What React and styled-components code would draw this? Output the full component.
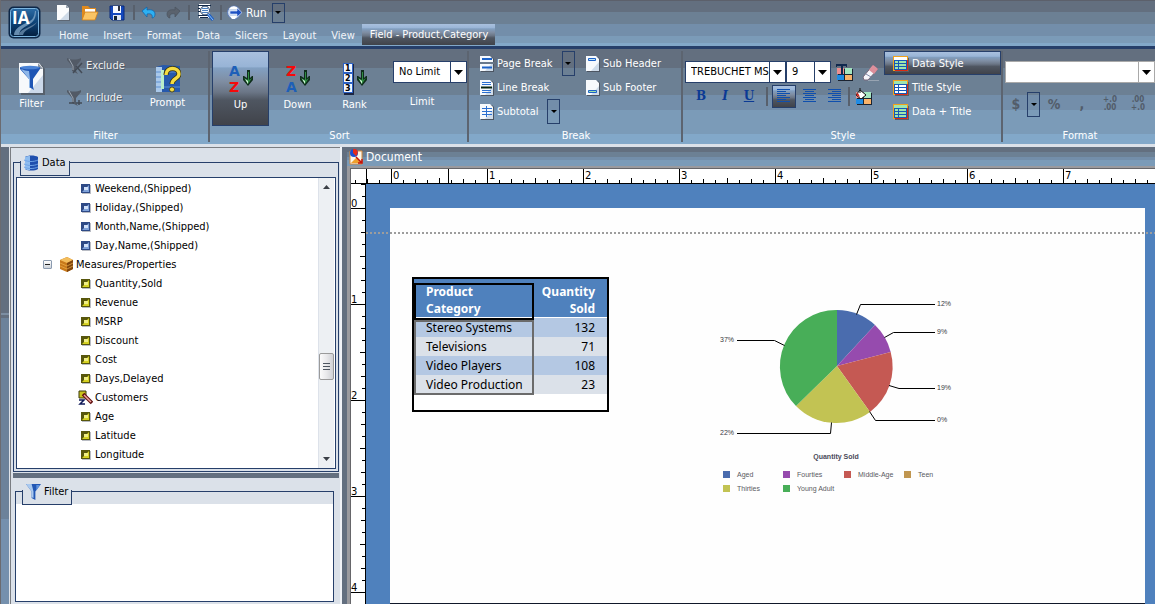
import React, { useEffect, useState } from 'react';
import styled, { createGlobalStyle, css } from 'styled-components';

const NAVY = '#263f6a';
const PANEL = '#dbe1e9';
const UI_FONT = '"DejaVu Sans Condensed", "DejaVu Sans", sans-serif';

const GlobalStyle = createGlobalStyle`
    * {
        box-sizing: border-box;
    }
    body {
        margin: 0;
        background: #ffffff;
        font-family: ${UI_FONT};
        font-size: 11px;
        line-height: 14px;
    }
    button, select, input {
        font: inherit;
    }
`;

const glossy = css`
    background: linear-gradient(#a9c0de, #98b4d6 20%, #82a0c2 22%, #7f8ea3 40%, #6b7686 55%, #4f5661 66%, #40434a);
`;

const Window = styled.div`
    display: flex;
    flex-direction: column;
    height: calc(100vh - 2px);
    margin-right: 2px;
    border-left: 1px solid #6b6b70;
    overflow: hidden;
`;

/* ---------- top bar ---------- */

const TopBar = styled.header`
    display: flex;
    height: 49px;
    border-top: 1px solid #5c606b;
    border-bottom: 3px solid ${NAVY};
    background: linear-gradient(#636f7f 11px, #6c8094 11px 23px, #738eaa 23px 35px, #7b9bb8 35px 42px, #82a8c9 42px);
`;
const LogoButton = styled.button`
    width: 50px;
    padding: 2px 0 0 7px;
    border: 0;
    background: none;
    text-align: left;
`;
const TopRows = styled.div`
    flex: 1;
`;
const QuickBar = styled.div`
    display: flex;
    align-items: center;
    height: 23px;
    gap: 5px;
    padding-left: 3px;
`;
const IconButton = styled.button`
    display: flex;
    align-items: center;
    justify-content: center;
    width: ${props => props.$width || 20}px;
    height: 23px;
    padding: 0;
    border: 1px solid transparent;
    background: none;
    color: #ffffff;
    
    ${props => props.$active && css`
        ${glossy}
        border-color: ${NAVY};
    `}
`;
const QuickSeparator = styled.span`
    width: 2px;
    height: 15px;
    background: #58606c;
`;
const RunButton = styled.button`
    display: flex;
    align-items: center;
    gap: 3px;
    padding: 0;
    border: 0;
    background: none;
    color: #ffffff;
    font-size: 12px;
`;
const Tabs = styled.nav`
    display: flex;
    height: 21px;
`;
const Tab = styled.a`
    padding: 5px 7px 0 8px;
    color: #f2f5f9;
    text-decoration: none;
    white-space: nowrap;
    
    ${props => props.$active && css`
        ${glossy}
        padding-top: 4px;
        color: #ffffff;
    `}
`;

/* ---------- ribbon ---------- */

const Ribbon = styled.div`
    display: flex;
    height: 98px;
    padding: 2px 0;
    border-bottom: 3px solid ${PANEL};
    background: linear-gradient(#636f7f 19px, #6c8094 19px 46px, #738eaa 46px 61px, #7b9bb8 61px 85px, #82a8c9 85px);
`;
const Group = styled.section`
    display: flex;
    flex-direction: column;
    min-width: 0;
    ${props => props.$width ? css`
        flex: 0 0 ${props.$width}px;
        border-right: 2px solid #5c6470;
    ` : css`
        flex: 1;
    `}
    padding-left: 2px;
    color: #ffffff;
`;
const GroupBody = styled.div`
    display: flex;
    flex: 1;
    gap: ${props => props.$gap || 0}px;
`;
const GroupLabel = styled.h2`
    margin: 0;
    font-size: 11px;
    font-weight: normal;
    line-height: 12px;
    text-align: center;
`;
const BigButton = styled.button`
    display: flex;
    flex-direction: column;
    align-items: center;
    justify-content: center;
    gap: 2px;
    width: 57px;
    height: 75px;
    padding: 0 0 4px;
    border: 1px solid transparent;
    background: none;
    color: #ffffff;
    line-height: 14px;

    ${props => props.$active && css`
        ${glossy}
        border-color: ${NAVY};
    `}
`;
const ToolColumn = styled.div`
    display: flex;
    flex-direction: column;
    flex: ${props => props.$width ? 'none' : 1};
    width: ${props => props.$width ? `${props.$width}px` : 'auto'};
    padding-left: ${props => props.$indent || 0}px;
    padding-top: ${props => props.$top || 0}px;
    gap: ${props => props.$gap || 0}px;
`;
const ToolRow = styled.div`
    display: flex;
    align-items: center;
    height: 24px;
    padding-left: ${props => props.$indent || 0}px;
    gap: ${props => props.$gap || 0}px;
`;
const ToolButton = styled.button`
    display: flex;
    align-items: center;
    gap: 3px;
    height: 24px;
    width: ${props => props.$wide ? '117px' : 'auto'};
    padding: 2px 0 0 ${props => props.$wide ? 8 : 0}px;
    border: ${props => props.$wide ? 1 : 0}px solid transparent;
    background: none;
    color: #ffffff;
    white-space: nowrap;

    ${props => props.$active && css`
        ${glossy}
        border-color: ${NAVY};
    `}
    &:disabled {
        color: #f0f0f0;
        text-shadow: 1px 1px 0 #4f5660;
    }
`;
const Drop = styled.button`
    display: flex;
    align-items: center;
    justify-content: center;
    flex: none;
    width: 13px;
    height: ${props => props.$small ? 20 : 25}px;
    padding: 0;
    border: 1px solid ${NAVY};
    background: none;

    &::after {
        content: '';
        border: 3px solid transparent;
        border-top-color: #000000;
        border-bottom: 0;
    }
`;
const Separator = styled.span`
    width: 2px;
    height: 19px;
    background: #58606c;
`;
const Selects = styled.div`
    display: flex;
`;
const SelectFrame = styled.span`
    position: relative;
    display: flex;
    height: 22px;
    width: ${props => props.$width ? `${props.$width}px` : '100%'};
    border: 1px solid ${props => props.$plain ? '#a9a9a9' : NAVY};
    background: linear-gradient(${props => props.$plain ? '#a9a9a9, #a9a9a9' : `${NAVY}, ${NAVY}`}) right 15px top / 1px 20px no-repeat #ffffff;
`;
const Select = styled.select`
    appearance: none;
    width: 100%;
    height: 20px;
    min-width: 0;
    padding: 0 0 0 5px;
    border: 0;
    background: none;
    color: #000000;
`;
const SelectArrow = styled.svg`
    position: absolute;
    right: 3px;
    top: 8px;
    pointer-events: none;
`;
const LimitLabel = styled.label`
    padding-right: 16px;
    text-align: center;
`;
const Letter = styled.button`
    width: 24px;
    height: 23px;
    padding: 0;
    border: 0;
    background: none;
    color: #0b3a94;
    font-family: "DejaVu Serif", serif;
    font-size: 12px;
    font-weight: bold;
    font-style: ${props => props.$italic ? 'italic' : 'normal'};
    text-decoration: ${props => props.$underline ? 'underline' : 'none'};
`;
const FormatButton = styled.button`
    flex: none;
    width: ${props => props.$narrow ? 22 : 28}px;
    height: 24px;
    padding: 0;
    border: 0;
    background: none;
    color: #525c69;
    font-family: "DejaVu Sans Condensed", sans-serif;
    font-size: ${props => props.$tiny ? 8 : 14}px;
    font-weight: bold;
    line-height: 8px;
`;

/* ---------- side panels ---------- */

const Body = styled.div`
    display: flex;
    flex: 1;
    min-height: 0;
`;
const Gutter = styled.div`
    width: 8px;
    background: linear-gradient(#636f7f 166px, #7c8ea2 166px 168px, #636f7f 168px 171px, #6c829a 171px 372px, #7590ad 372px);
`;
const Side = styled.aside`
    display: flex;
    flex-direction: column;
    width: 333px;
    border-left: 1px solid #dfe3e8;
    border-right: 2px solid #f0f3f7;
`;
const SidePane = styled.div`
    display: flex;
    flex-direction: column;
    flex: ${props => props.$grow ? 1 : 'none'};
    padding: ${props => props.$grow ? '5px 6px 2px 4px' : '6px 1px 0 2px'};
    border-left: 1px solid #7a7d82;
    border-top: ${props => props.$grow ? 0 : 1}px solid #7a7d82;
    background: ${PANEL};
`;
const PaneHead = styled.div`
    display: flex;
    margin-bottom: -14px;
`;
const PaneTab = styled.h3`
    position: relative;
    display: flex;
    align-items: center;
    gap: 3px;
    height: 22px;
    margin: 0 0 0 7px;
    padding: 0 4px 4px;
    background: ${PANEL};
    font-size: 11px;
    font-weight: normal;

    &::after {
        content: '';
        position: absolute;
        left: 0;
        right: 0;
        bottom: 0;
        height: 14px;
        border: 1px solid ${NAVY};
        border-top: 0;
    }
`;
const Frame = styled.div`
    display: flex;
    flex-direction: column;
    flex: 1;
    padding: ${props => props.$flush ? '12px 0 0' : '14px 2px 2px'};
    border: 1px solid ${NAVY};
`;
const FilterArea = styled.div`
    flex: 1;
    background: #ffffff;
`;
const Splitter = styled.div`
    height: 5px;
    margin: 1px 0 0;
    background: #636f7f;
`;
const TreeBox = styled.div`
    display: flex;
    padding-right: 1px;
    border: 1px solid ${NAVY};
    background: #ffffff;
`;
const Tree = styled.ul`
    flex: 1;
    margin: 0;
    padding: 1px 0 4px;
    list-style-type: none;
`;
const TreeItem = styled.li`
    display: flex;
    align-items: center;
    gap: 2px;
    height: 19px;
    padding-left: ${props => props.$root ? 26 : 61}px;
`;
const Expander = styled.button`
    width: 9px;
    height: 9px;
    margin-right: 6px;
    padding: 0;
    border: 1px solid #8b9bb0;
    border-radius: 1px;
    background: linear-gradient(#222222, #222222) center / 5px 1px no-repeat, linear-gradient(#ffffff, #cdd3da);
`;
const Scrollbar = styled.div`
    display: flex;
    flex-direction: column;
    width: 16px;
    border-left: 1px solid #dde2ea;
    background: #edf0f3;
`;
const ScrollButton = styled.button`
    height: 18px;
    padding: 0;
    border: 0;
    background: none;
    line-height: 0;
`;
const ScrollTrack = styled.div`
    flex: 1;
    display: grid;
    grid-template-rows: 157fr 27px 70fr;
`;
const ScrollThumb = styled.div`
    grid-row: 2;
    display: flex;
    align-items: center;
    justify-content: center;
    border: 1px solid #9a9a9a;
    border-radius: 2px;
    background: linear-gradient(90deg, #fbfbfb, #e9e9eb 50%, #cfd1d5);

    &::after {
        content: '';
        width: 7px;
        height: 8px;
        background: repeating-linear-gradient(#4e5660 0 1px, transparent 1px 3px);
    }
`;

/* ---------- document ---------- */

const DocumentPane = styled.main`
    display: flex;
    flex-direction: column;
    flex: 1;
    min-width: 0;
    border-left: 5px solid #636f7f;
`;
const DocumentTitle = styled.h1`
    display: flex;
    align-items: center;
    gap: 2px;
    height: 19px;
    margin: 0;
    padding-left: 2px;
    background: linear-gradient(#636f7f 5px, #6c8094 5px 10px, #738eaa 10px 13px, #7b9bb8 13px);
    color: #ffffff;
    font-size: 12px;
    font-weight: normal;
`;
const Canvas = styled.div`
    display: grid;
    grid-template: 15px minmax(0, 1fr) / 15px minmax(0, 1fr);
    flex: 1;
    min-height: 0;
    border: solid #9a9a9e;
    border-width: 2px 0 0 3px;
    box-shadow: inset 1px 1px 0 #66666a;
    padding: 1px 0 0 1px;
`;
const RulerSvg = styled.svg`
    display: block;
    width: 100%;
    height: 100%;
    background: #ffffff;
    font-size: 10px;
    font-family: "DejaVu Sans", sans-serif;
`;
const TopRuler = styled.div`
    grid-column: 1 / 3;
    border-bottom: 1px solid #000000;
    overflow: hidden;
`;
const SideRuler = styled.div`
    border-right: 1px solid #000000;
    overflow: hidden;
`;
const Desk = styled.div`
    position: relative;
    display: flex;
    padding: 24px 10px 0 24px;
    background: #4f81bd;
    overflow: hidden;
`;
const MarginLine = styled.div`
    position: absolute;
    top: 48px;
    left: 0;
    right: 0;
    height: 2px;
    background: repeating-linear-gradient(90deg, #9d9d9d 0 2px, transparent 2px 4px);
`;
const Page = styled.article`
    display: flex;
    flex: 1;
    align-items: flex-start;
    gap: 106px;
    padding: 69px 22px 0;
    border-bottom: 1px solid #10182a;
    background: #fefefe;
`;
const Report = styled.div`
    position: relative;
    flex: none;
    width: 197px;
    height: 135px;
    border: 2px solid #000000;
    background: #ffffff;
`;
const Table = styled.table`
    width: 100%;
    table-layout: fixed;
    border-spacing: 0;
    font-family: "Noto Sans", sans-serif;
    font-size: 12px;
    line-height: 18px;

    th, td {
        padding: 0 0 0 12px;
        text-align: left;
        white-space: nowrap;
    }
    th {
        height: 39px;
        padding-top: 4px;
        background: #4f81bd;
        border-bottom: 1px solid #ffffff;
        color: #ffffff;
        line-height: 17px;
    }
    th:last-child, td:last-child {
        width: 74px;
        padding-left: 0;
        padding-right: 12px;
        text-align: right;
    }
    td {
        height: 19px;
        background: ${PANEL};
    }
    tr:nth-child(odd) td {
        background: #b4c8e3;
    }
`;
const Selection = styled.div`
    position: absolute;
    left: 0;
    width: 120px;
    top: ${props => props.$header ? 4 : 41}px;
    height: ${props => props.$header ? 37 : 75}px;
    border: 2px solid ${props => props.$header ? '#000000' : '#6b6b6b'};
`;
const Chart = styled.svg`
    flex: none;
    margin-top: 18px;
    font-family: "Liberation Sans", sans-serif;
    font-size: 7px;
`;

/* ---------- icons ---------- */

function NewIcon(){
    return (
        <svg width="16" height="16" viewBox="0 0 16 16">
            <path d="M2 1h9l3 3v12H2z" fill="#5d6774" />
            <path d="M1 0h9l3 3v12H1z" fill="#fbfcfd" />
            <path d="M13 6v9H4z" fill="#cfdbe8" />
            <path d="M10 0v3h3z" fill="#9aa5b2" />
        </svg>
    );
}

function OpenIcon(){
    return (
        <svg width="18" height="16" viewBox="0 0 18 16">
            <path d="M1 1h6l2 2h6v11H1z" fill="#e08a1e" />
            <path d="M4 4h10v6H4z" fill="#ffffff" />
            <path d="M4 7h13l-3 8H1z" fill="#fbc565" stroke="#d07d16" strokeWidth=".8" />
        </svg>
    );
}

function SaveIcon(){
    return (
        <svg width="16" height="16" viewBox="0 0 16 16">
            <path d="M1 1h14v14H3l-2-2z" fill="#1448bd" stroke="#0a2a7a" />
            <path d="M4 1h8v7H4z" fill="#f5f8ff" />
            <path d="M9 1h2v5H9z" fill="#2a2f3c" />
            <path d="M4 10h8v5H4z" fill="#dfe6f2" />
            <path d="M5 11h3v4H5z" fill="#123" />
        </svg>
    );
}

function UndoIcon({ redo }){
    return (
        <svg width="14" height="13" viewBox="0 0 14 13">
            <g transform={redo ? 'translate(14 0) scale(-1 1)' : undefined}>
                <path
                    d="M0 5l5-4v3c5-1 8 1 8 4 0 2-1 4-3 4 1-3-1-5-5-4v3z"
                    fill={redo ? '#5a626d' : '#2db0f2'}
                    stroke={redo ? '#4b535e' : '#0f5fa6'}
                    strokeWidth=".7"
                />
            </g>
        </svg>
    );
}

function PreviewIcon(){
    return (
        <svg width="17" height="17" viewBox="0 0 17 17">
            <path d="M2 0h11v14H2z" fill="#ffffff" />
            <path d="M1 1.500h13M1 11.500h13M3 13.500h8M1 4.500h2M1 7.500h2" stroke="#102746" />
            <circle cx="8" cy="6.500" r="4.500" fill="#f2f8fe" stroke="#1a3358" />
            <path d="M5 4.500h6M5 6.500h6M5 8.500h6" stroke="#1e5fae" strokeWidth=".8" />
            <path d="M11 10l5 6" stroke="#1d5fc4" strokeWidth="3" />
            <path d="M11 10l5 6" stroke="#8fc1f5" strokeWidth="1" />
        </svg>
    );
}

function GlobeIcon(){
    return (
        <svg width="16" height="16" viewBox="0 0 16 16">
            <circle cx="7" cy="7.500" r="6.500" fill="#c9d8ef" stroke="#5a7ab8" />
            <path d="M2 4c3-4 8-3 9 0zM3 11h7l-2 3H5z" fill="#ffffff" />
            <path d="M3 6h7V3l5 4.500L10 12V9H3z" fill="#1c4fc2" stroke="#e6eefb" strokeWidth=".6" />
        </svg>
    );
}

function LogoIcon(){
    return (
        <svg width="34" height="34" viewBox="0 0 34 34">
            <defs>
                <linearGradient id="logo" x1="0" y1="0" x2="0" y2="1">
                    <stop offset="0" stopColor="#2f6fa8" />
                    <stop offset=".5" stopColor="#0d4377" />
                    <stop offset="1" stopColor="#041d3c" />
                </linearGradient>
            </defs>
            <rect x="1.500" y="1.500" width="30" height="30" rx="4" fill="url(#logo)" stroke="#0c2748" strokeWidth="2" />
            <rect x="2.500" y="2.500" width="28" height="28" rx="3" fill="none" stroke="#7cb5df" />
            <path d="M27 5c-1 7-2 9-9 12-7 3-12 7-12 12h5c1-6 4-7 9-10 6-3 8-7 8-14z" fill="#7fa6c8" opacity=".8" />
            <path d="M15 29c1-6 11-7 14-13-2 2-6 4-10 6-5 2-8 4-8 7z" fill="#56789a" />
            <text x="4" y="18" fill="#ffffff" fontSize="17" fontWeight="bold" fontFamily="Open Sans, sans-serif">IA</text>
        </svg>
    );
}

function FunnelIcon(){
    return (
        <svg width="15" height="16" viewBox="0 0 16 17">
            <path d="M0 0h16l-6 8v9l-4-2V8z" fill="#2257b4" />
            <path d="M0 0h6l2 8v7l-2-1V8z" fill="#a9c9ef" />
            <path d="M11 1h4l-4 6z" fill="#5d92dd" />
        </svg>
    );
}

function FilterIcon(){
    return (
        <svg width="28" height="32" viewBox="0 0 28 32">
            <path d="M3 2h21l3 4v26H3z" fill="#56606c" />
            <path d="M1 0h20l4 5v25H1z" fill="#f7f9fb" />
            <path d="M25 12v18H10z" fill="#ccd9ea" />
            <path d="M20 0v6h5z" fill="#8a94a2" />
            <path d="M2 4c5 2 15 2 20 0v2l-7 10v8l1 3-5-3v-8L2 6z" fill="#1f56b5" />
            <path d="M3 6c3 1 5 2 8 2l1 8v9l-1-1v-8z" fill="#8fb7e8" />
            <ellipse cx="12" cy="4.500" rx="9.500" ry="1.800" fill="#4a83d6" />
        </svg>
    );
}

function SmallFunnelIcon({ plus }){
    return (
        <svg width="16" height="16" viewBox="0 0 16 16">
            <path d="M0 0c4 2 10 2 14 0v2L9 8v5l2 3-6-3V8L0 2z" fill="#525a66" />
            <path d="M2 1l4 7v4" stroke="#9ba5b1" fill="none" />
            {plus
                ? <path d="M2 13h5M12 10v5M9 13h6" stroke="#434b56" strokeWidth="1.500" />
                : <path d="M9 8l6 7M15 5L6 15" stroke="#434b56" strokeWidth="1.500" />}
        </svg>
    );
}

function PromptIcon(){
    return (
        <svg width="26" height="30" viewBox="0 0 26 30">
            <path d="M1 3l7-2 17 1v26L1 28z" fill="#2659ad" />
            <path d="M1 3h6v25H1z" fill="#a9c8ea" />
            <path d="M1 8h6M1 13h6M1 18h6M1 23h6M8 8h17M8 23h17" stroke="#5c8fd0" />
            <path d="M6 6h3v19H6z" fill="#b9ecc9" />
            <path d="M11 11c0-9 13-8 13-1 0 5-7 4-7 10" fill="none" stroke="#3a3410" strokeWidth="5" />
            <path d="M11 11c0-9 13-8 13-1 0 5-7 4-7 10" fill="none" stroke="#f5dc42" strokeWidth="3.400" />
            <circle cx="17" cy="25.500" r="2.500" fill="#f5dc42" stroke="#3a3410" strokeWidth=".8" />
        </svg>
    );
}

function GreenArrow(){
    return (
        <g transform="translate(0 2)">
            <path d="M19 6h3v8l2-2h1v4l-5 6-5-6v-4h1l3 2z" fill="#0f2d1b" />
            <path d="M20 8h1v8l3-2-4 6-4-6 4 2z" fill="#2f8b42" />
            <path d="M17 15l3 2v3z" fill="#d3f5d8" />
        </g>
    );
}

function SortIcon({ first, second, firstColor, secondColor }){
    return (
        <svg width="26" height="34" viewBox="0 0 26 34" fontFamily="DejaVu Sans, sans-serif" fontWeight="bold" fontSize="14">
            <text x="1" y="14" fill={firstColor}>{first}</text>
            <text x="1" y="30" fill={secondColor}>{second}</text>
            <GreenArrow />
        </svg>
    );
}

function RankIcon(){
    return (
        <svg width="26" height="34" viewBox="0 0 26 34" fontFamily="DejaVu Sans, sans-serif" fontWeight="bold" fontSize="8">
            <path d="M2 2h10v31H2z" fill="#1c2542" />
            {[1, 2, 3].map((n, i) => (
                <g key={n}>
                    <rect x="1.500" y={1.5 + i * 10} width="9" height="9" fill="#f3f7ff" stroke="#2d62c4" />
                    <text x="3" y={9 + i * 10} fill="#000000">{n}</text>
                </g>
            ))}
            <GreenArrow />
        </svg>
    );
}

const PAGE_MARKS = {
    pageBreak: <path d="M2 3h10M2 11.500h10" stroke="#1d62c8" strokeWidth="2" />,
    lineBreak: <path d="M2 2.500h9M2 4.500h9M2 10.500h9M2 12.500h9" stroke="#2b6fd0" />,
    subtotal: <path d="M2 4.500h10M2 7.500h10M2 10.500h10M6.500 2v11" stroke="#2b6fd0" />,
    header: <path d="M2.500 2.500h7v2h-7z" stroke="#1d62c8" fill="#bfe3f7" />,
    footer: <path d="M2.500 10.500h8v2h-8z" stroke="#1d62c8" fill="#a2e2a9" />
};

function PageIcon({ kind }){
    return (
        <svg width="14" height="16" viewBox="0 0 14 16">
            <path d="M1 1h11l2 2v13H1z" fill="#4c5562" />
            <path d="M0 0h10l3 3v12H0z" fill="#f7fafd" />
            <path d="M13 6v9H5z" fill="#cfdcea" />
            {PAGE_MARKS[kind]}
            {kind === 'pageBreak' && <path d="M0 6h14v2H0z" fill="#68788b" />}
            {kind === 'lineBreak' && <path d="M1 7.500h11" stroke="#0a2610" strokeWidth="2" />}
        </svg>
    );
}

function AlignIcon({ align }){
    const widths = [13, 9, 13, 9, 13, 9, 13];
    return (
        <svg width="14" height="14" viewBox="0 0 14 14" shapeRendering="crispEdges">
            {widths.map((w, i) => {
                const x = align === 'left' ? 0 : align === 'right' ? 14 - w : (13 - w) / 2;
                return <rect key={i} x={x} y={i * 2} width={w} height="1" fill="#0f4fae" />;
            })}
        </svg>
    );
}

function SwatchIcon({ paint }){
    return (
        <svg width="18" height="17" viewBox="0 0 18 17">
            <path d="M2 5h15v12H2z" fill="#1b2330" />
            <path d="M1 4h7v6H1z" fill="#ee8f8f" />
            <path d="M9 4h7v6H9z" fill="#a3e5c0" />
            <path d="M1 11h7v5H1z" fill="#1f8be4" />
            <path d="M9 11h7v5H9z" fill="#f8b26a" />
            {paint
                ? (
                    <g>
                        <path d="M1 7l4-5 6 5-5 4z" fill="#ffffff" stroke="#111111" />
                        <path d="M1 7l2-2 2 4z" fill="#d8201a" />
                        <path d="M5 5V0" stroke="#111111" />
                    </g>
                )
                : <path d="M0 0h11v3h-1V2H7v8h1v1H3v-1h2V2H1v1H0z" fill="#10284e" />}
        </svg>
    );
}

function EraserIcon(){
    return (
        <svg width="18" height="17" viewBox="0 0 18 17">
            <path d="M6 16.500h11" stroke="#98a4b2" />
            <path d="M1 13L11 1l5 4L6 16H2z" fill="#f5f5fa" stroke="#77697c" />
            <path d="M7 6l4-5 5 4-4 5z" fill="#dd8f9b" />
            <path d="M4 10l5 3" stroke="#7d88a8" />
        </svg>
    );
}

function StyleIcon({ top, cells }){
    return (
        <svg width="16" height="16" viewBox="0 0 16 16">
            <path d="M2 2h14v14H2z" fill="#555d68" />
            <path d="M0 0h15v15H0z" fill="#f0a21c" />
            <path d="M1 1h13v3H1z" fill={top} />
            <path d="M1 4h13v10H1z" fill="#1558b8" />
            {[5, 8, 11].map(y => <path key={y} d={`M2 ${y}h3v2H2zM6 ${y}h7v2H6z`} fill={cells} />)}
            <path d="M14.500 4v10.500H2" fill="none" stroke="#dc2a12" />
        </svg>
    );
}

function DatabaseIcon(){
    return (
        <svg width="15" height="16" viewBox="0 0 15 16">
            <path d="M1 2c3-2 10-2 13 0v12c-3 2-10 2-13 0z" fill="#1f4fae" />
            <path d="M1 2c2-1 3-1 5-1v14c-2 0-3 0-5-1z" fill="#8ebcf0" />
            <path d="M0 5c4 2 10 2 14 0M0 9c4 2 10 2 14 0M0 12c4 2 10 2 14 0" stroke="#6ea3e6" fill="none" />
        </svg>
    );
}

function FieldIcon({ kind }){
    if(kind === 'rank'){
        return (
            <svg width="15" height="15" viewBox="0 0 15 15">
                <path d="M1 1h7v7H1z" fill="#c9c21a" stroke="#3a3a0a" />
                <path d="M1 10h5l-4 4h5" stroke="#101a5a" fill="none" strokeWidth="1.500" />
                <path d="M5 4l9 9" stroke="#5e0d0d" strokeWidth="3.500" />
                <path d="M6 5l7 7" stroke="#f0a5a0" strokeWidth="1.500" />
            </svg>
        );
    }
    const measure = kind === 'measure';
    return (
        <svg width="15" height="10" viewBox="0 0 15 10">
            <path d="M4 1h9v9H4z" fill="#b9bcc4" />
            <path d="M3 0h9v9H3z" fill={measure ? '#57560c' : '#2e4a86'} />
            <path d="M11 1v7H4z" fill={measure ? '#d6d222' : '#7fa2da'} />
            <path d="M6 3h4v3H6z" fill={measure ? '#f0ee84' : '#d2e2fa'} />
        </svg>
    );
}

function CubeIcon(){
    return (
        <svg width="14" height="15" viewBox="0 0 14 15">
            <path d="M7 0l6 3v9l-6 3-7-3V3z" fill="#c8791a" />
            <path d="M7 0l6 3-6 3-7-3z" fill="#f3bd5c" />
            <path d="M7 6l6-3v9l-6 3z" fill="#80450c" />
            <path d="M0 6l7 3 6-3M0 9l7 3 6-3" stroke="#f0b14a" fill="none" strokeWidth=".7" />
        </svg>
    );
}

function DocumentIcon(){
    return (
        <svg width="15" height="16" viewBox="0 0 15 16">
            <path d="M1 2h12v13H1z" fill="#fdf6e8" stroke="#d98a3a" />
            <circle cx="5" cy="4" r="4" fill="#1c4fd0" />
            <path d="M4 4V0c5-1 6 4 3 7z" fill="#e62a1a" />
            <path d="M2 14l5-5 6 5z" fill="#f0a02c" />
            <path d="M7 8l6 6M13 10v4H9" stroke="#c4120c" strokeWidth="1.500" fill="none" />
        </svg>
    );
}

/* ---------- pieces ---------- */

function DropSelect({ width, plain, label, value }){
    return (
        <SelectFrame $width={width} $plain={plain}>
            <Select aria-label={label} id={label} defaultValue={value}>
                <option>{value}</option>
            </Select>
            <SelectArrow width="9" height="5" viewBox="0 0 9 5">
                <path d="M0 0h9L4.500 5z" fill="#000000" />
            </SelectArrow>
        </SelectFrame>
    );
}

function RulerMarks({ origin, vertical, length }){
    const ticks = [];
    for(let i = -3; origin + i * 12 < length; i++){
        const pos = origin + i * 12;
        const step = ((i % 8) + 8) % 8;
        const size = step === 0 ? 14 : step === 4 ? 5 : step % 2 ? 3 : 4;
        ticks.push(vertical
            ? <rect key={i} x={14 - size} y={pos} width={size} height="1" />
            : <rect key={i} x={pos} y={14 - size} width="1" height={size} />);
        if(step === 0){
            ticks.push(
                <text key={`n${i}`} x={vertical ? 0 : pos + 2} y={vertical ? pos - 1 : 10}>{i / 8}</text>
            );
        }
    }
    return (
        <RulerSvg shapeRendering="crispEdges">
            {ticks}
            {!vertical && <path d={`M${origin - 24.5} 0v14M${origin + 57.5} 0v14`} stroke="#000000" />}
        </RulerSvg>
    );
}

const FIELDS = [
    ['Weekend,(Shipped)', 'date'],
    ['Holiday,(Shipped)', 'date'],
    ['Month,Name,(Shipped)', 'date'],
    ['Day,Name,(Shipped)', 'date'],
    ['Measures/Properties', 'root'],
    ['Quantity,Sold', 'measure'],
    ['Revenue', 'measure'],
    ['MSRP', 'measure'],
    ['Discount', 'measure'],
    ['Cost', 'measure'],
    ['Days,Delayed', 'measure'],
    ['Customers', 'rank'],
    ['Age', 'measure'],
    ['Latitude', 'measure'],
    ['Longitude', 'measure']
];

const ROWS = [
    ['Stereo Systems', 132],
    ['Televisions', 71],
    ['Video Players', 108],
    ['Video Production', 23]
];

const SLICES = [
    ['#4a6cae', 'M122 71L122 15A56.500 56.500 0 0 1 160 30Z'],
    ['#964bae', 'M122 71L160 30A56.500 56.500 0 0 1 175.700 57Z'],
    ['#c55953', 'M122 71L175.700 57A56.500 56.500 0 0 1 155 117Z'],
    ['#c2c353', 'M122 71L155 117A56.500 56.500 0 0 1 81 111Z'],
    ['#48ae58', 'M122 71L81 111A56.500 56.500 0 0 1 122 15Z']
];

const CALLOUTS = [
    ['12%', 222, 11, 'M141.500 19.500L145.500 9.500H220'],
    ['9%', 222, 39, 'M169.500 42.500L178.500 37.500H220'],
    ['19%', 222, 95, 'M174 90.500L184 93.500H220'],
    ['0%', 222, 127, 'M154.500 116.500L160.500 125.500H220'],
    ['37%', 5, 47, 'M22 45.500H59.500L69.500 50.500'],
    ['22%', 5, 140, 'M22 138.500H115.500L116.500 127.500']
];

const LEGEND = [
    ['Aged', '#4a6cae', 8, 177],
    ['Fourties', '#964bae', 68, 177],
    ['Middle-Age', '#c55953', 129, 177],
    ['Teen', '#c09650', 189, 177],
    ['Thirties', '#c2c353', 8, 191],
    ['Young Adult', '#48ae58', 68, 191]
];

function PieChart(){
    return (
        <Chart width="240" height="205" viewBox="0 0 240 205" role="img" aria-label="Quantity Sold">
            {SLICES.map(([color, d]) => <path key={color} d={d} fill={color} />)}
            {CALLOUTS.map(([label, x, y, d]) => (
                <g key={label}>
                    <path d={d} fill="none" stroke="#000000" />
                    <text x={x} y={y} fill="#3a3a42">{label}</text>
                </g>
            ))}
            <text x="121" y="164" textAnchor="middle" fontWeight="bold" fill="#4a4a5a">Quantity Sold</text>
            {LEGEND.map(([label, color, x, y]) => (
                <g key={label}>
                    <rect x={x} y={y - 1} width="7" height="7" fill={color} />
                    <text x={x + 14} y={y + 5} fill="#5a5a62">{label}</text>
                </g>
            ))}
        </Chart>
    );
}

function RibbonBar(){
    const [sort, setSort] = useState('Up');
    const [area, setArea] = useState('Data Style');
    const styles = [
        ['Data Style', '#ffffff', '#9fe6ae'],
        ['Title Style', '#9fe6ae', '#ffffff'],
        ['Data + Title', '#9fe6ae', '#9fe6ae']
    ];

    return (
        <Ribbon>
            <Group $width={209}>
                <GroupBody>
                    <BigButton><FilterIcon />Filter</BigButton>
                    <ToolColumn $width={79} $indent={7} $top={2} $gap={8}>
                        <ToolButton disabled><SmallFunnelIcon />Exclude</ToolButton>
                        <ToolButton disabled><SmallFunnelIcon plus />Include</ToolButton>
                    </ToolColumn>
                    <BigButton><PromptIcon />Prompt</BigButton>
                </GroupBody>
                <GroupLabel>Filter</GroupLabel>
            </Group>
            <Group $width={259}>
                <GroupBody>
                    <BigButton $active={sort === 'Up'} onClick={() => setSort('Up')}>
                        <SortIcon first="A" firstColor="#1d5fb8" second="Z" secondColor="#f40a0a" />Up
                    </BigButton>
                    <BigButton $active={sort === 'Down'} onClick={() => setSort('Down')}>
                        <SortIcon first="Z" firstColor="#f40a0a" second="A" secondColor="#1d5fb8" />Down
                    </BigButton>
                    <BigButton $active={sort === 'Rank'} onClick={() => setSort('Rank')}><RankIcon />Rank</BigButton>
                    <ToolColumn $width={84} $indent={10} $top={10} $gap={12}>
                        <DropSelect width={74} label="limit" value="No Limit" />
                        <LimitLabel htmlFor="limit">Limit</LimitLabel>
                    </ToolColumn>
                </GroupBody>
                <GroupLabel>Sort</GroupLabel>
            </Group>
            <Group $width={214}>
                <GroupBody>
                    <ToolColumn $width={115} $indent={9}>
                        <ToolRow $gap={9}>
                            <ToolButton><PageIcon kind="pageBreak" />Page Break</ToolButton>
                            <Drop aria-label="Page break options" />
                        </ToolRow>
                        <ToolButton><PageIcon kind="lineBreak" />Line Break</ToolButton>
                        <ToolRow $gap={9}>
                            <ToolButton><PageIcon kind="subtotal" />Subtotal</ToolButton>
                            <Drop aria-label="Subtotal options" />
                        </ToolRow>
                    </ToolColumn>
                    <ToolColumn $width={90}>
                        <ToolButton><PageIcon kind="header" />Sub Header</ToolButton>
                        <ToolButton><PageIcon kind="footer" />Sub Footer</ToolButton>
                    </ToolColumn>
                </GroupBody>
                <GroupLabel>Break</GroupLabel>
            </Group>
            <Group $width={320}>
                <GroupBody>
                    <ToolColumn $width={199} $top={9}>
                        <ToolRow $gap={4}>
                            <Selects>
                                <DropSelect width={101} label="font" value="TREBUCHET MS" />
                                <DropSelect width={45} label="size" value="9" />
                            </Selects>
                            <IconButton aria-label="Text colour"><SwatchIcon /></IconButton>
                            <IconButton $width={24} aria-label="Clear"><EraserIcon /></IconButton>
                        </ToolRow>
                        <ToolRow $gap={5}>
                            <ToolRow $indent={4}>
                                <Letter>B</Letter>
                                <Letter $italic>I</Letter>
                                <Letter $underline>U</Letter>
                            </ToolRow>
                            <ToolRow $gap={4}>
                                <Separator />
                                <IconButton $width={24} $active aria-label="Left"><AlignIcon align="left" /></IconButton>
                                <IconButton aria-label="Centre"><AlignIcon align="center" /></IconButton>
                                <IconButton aria-label="Right"><AlignIcon align="right" /></IconButton>
                                <Separator />
                                <IconButton aria-label="Fill"><SwatchIcon paint /></IconButton>
                            </ToolRow>
                        </ToolRow>
                    </ToolColumn>
                    <ToolColumn $width={117}>
                        {styles.map(([name, top, cells]) => (
                            <ToolButton key={name} $wide $active={area === name} onClick={() => setArea(name)}>
                                <StyleIcon top={top} cells={cells} />{name}
                            </ToolButton>
                        ))}
                    </ToolColumn>
                </GroupBody>
                <GroupLabel>Style</GroupLabel>
            </Group>
            <Group>
                <ToolColumn $top={10} $gap={9}>
                    <DropSelect plain label="format" value="" />
                    <ToolRow>
                        <FormatButton $narrow>$</FormatButton>
                        <Drop aria-label="Currency" />
                        <FormatButton>%</FormatButton>
                        <FormatButton>,</FormatButton>
                        <FormatButton $tiny>+.0<br />.00</FormatButton>
                        <FormatButton $tiny>.00<br />+.0</FormatButton>
                    </ToolRow>
                </ToolColumn>
                <GroupLabel>Format</GroupLabel>
            </Group>
        </Ribbon>
    );
}

export default function App(){
    const tabs = ['Home', 'Insert', 'Format', 'Data', 'Slicers', 'Layout', 'View', 'Field - Product,Category'];
    const [size, setSize] = useState([window.innerWidth, window.innerHeight]);

    useEffect(() => {
        const onResize = () => setSize([window.innerWidth, window.innerHeight]);
        window.addEventListener('resize', onResize);
        return () => window.removeEventListener('resize', onResize);
    }, []);

    return (
        <Window>
            <GlobalStyle />
            <TopBar>
                <LogoButton aria-label="Application menu"><LogoIcon /></LogoButton>
                <TopRows>
                    <QuickBar>
                        <IconButton aria-label="New"><NewIcon /></IconButton>
                        <IconButton aria-label="Open" $width={22}><OpenIcon /></IconButton>
                        <IconButton aria-label="Save" $width={22}><SaveIcon /></IconButton>
                        <QuickSeparator />
                        <IconButton aria-label="Undo" $width={18}><UndoIcon /></IconButton>
                        <IconButton aria-label="Redo"><UndoIcon redo /></IconButton>
                        <QuickSeparator />
                        <IconButton aria-label="Preview"><PreviewIcon /></IconButton>
                        <QuickSeparator />
                        <RunButton><GlobeIcon />Run</RunButton>
                        <Drop $small aria-label="Run options" />
                    </QuickBar>
                    <Tabs>
                        {tabs.map((tab, i) => (
                            <Tab key={tab} href="#" $active={i === tabs.length - 1}>{tab}</Tab>
                        ))}
                    </Tabs>
                </TopRows>
            </TopBar>
            <RibbonBar />
            <Body>
                <Gutter />
                <Side>
                    <SidePane>
                        <PaneHead>
                            <PaneTab><DatabaseIcon />Data</PaneTab>
                        </PaneHead>
                        <Frame>
                            <TreeBox>
                                <Tree>
                                    {FIELDS.map(([name, kind]) => (
                                        <TreeItem key={name} $root={kind === 'root'}>
                                            {kind === 'root'
                                                ? <><Expander aria-label="Collapse" /><CubeIcon /></>
                                                : <FieldIcon kind={kind} />}
                                            {name}
                                        </TreeItem>
                                    ))}
                                </Tree>
                                <Scrollbar>
                                    <ScrollButton aria-label="Scroll up">
                                        <svg width="7" height="4"><path d="M0 4h7L3.500 0z" fill="#3b3f46" /></svg>
                                    </ScrollButton>
                                    <ScrollTrack><ScrollThumb /></ScrollTrack>
                                    <ScrollButton aria-label="Scroll down">
                                        <svg width="7" height="4"><path d="M0 0h7L3.500 4z" fill="#3b3f46" /></svg>
                                    </ScrollButton>
                                </Scrollbar>
                            </TreeBox>
                        </Frame>
                        <Splitter />
                    </SidePane>
                    <SidePane $grow>
                        <PaneHead>
                            <PaneTab><FunnelIcon />Filter</PaneTab>
                        </PaneHead>
                        <Frame $flush><FilterArea /></Frame>
                    </SidePane>
                </Side>
                <DocumentPane>
                    <DocumentTitle><DocumentIcon />Document</DocumentTitle>
                    <Canvas>
                        <TopRuler><RulerMarks origin={40} length={size[0] - 354} /></TopRuler>
                        <SideRuler><RulerMarks origin={24} length={size[1] - 186} vertical /></SideRuler>
                        <Desk>
                            <Page>
                                <Report>
                                    <Table>
                                        <thead>
                                            <tr><th>Product<br />Category</th><th>Quantity<br />Sold</th></tr>
                                        </thead>
                                        <tbody>
                                            {ROWS.map(([name, sold]) => (
                                                <tr key={name}><td>{name}</td><td>{sold}</td></tr>
                                            ))}
                                        </tbody>
                                    </Table>
                                    <Selection />
                                    <Selection $header />
                                </Report>
                                <PieChart />
                            </Page>
                            <MarginLine />
                        </Desk>
                    </Canvas>
                </DocumentPane>
            </Body>
        </Window>
    );
}
